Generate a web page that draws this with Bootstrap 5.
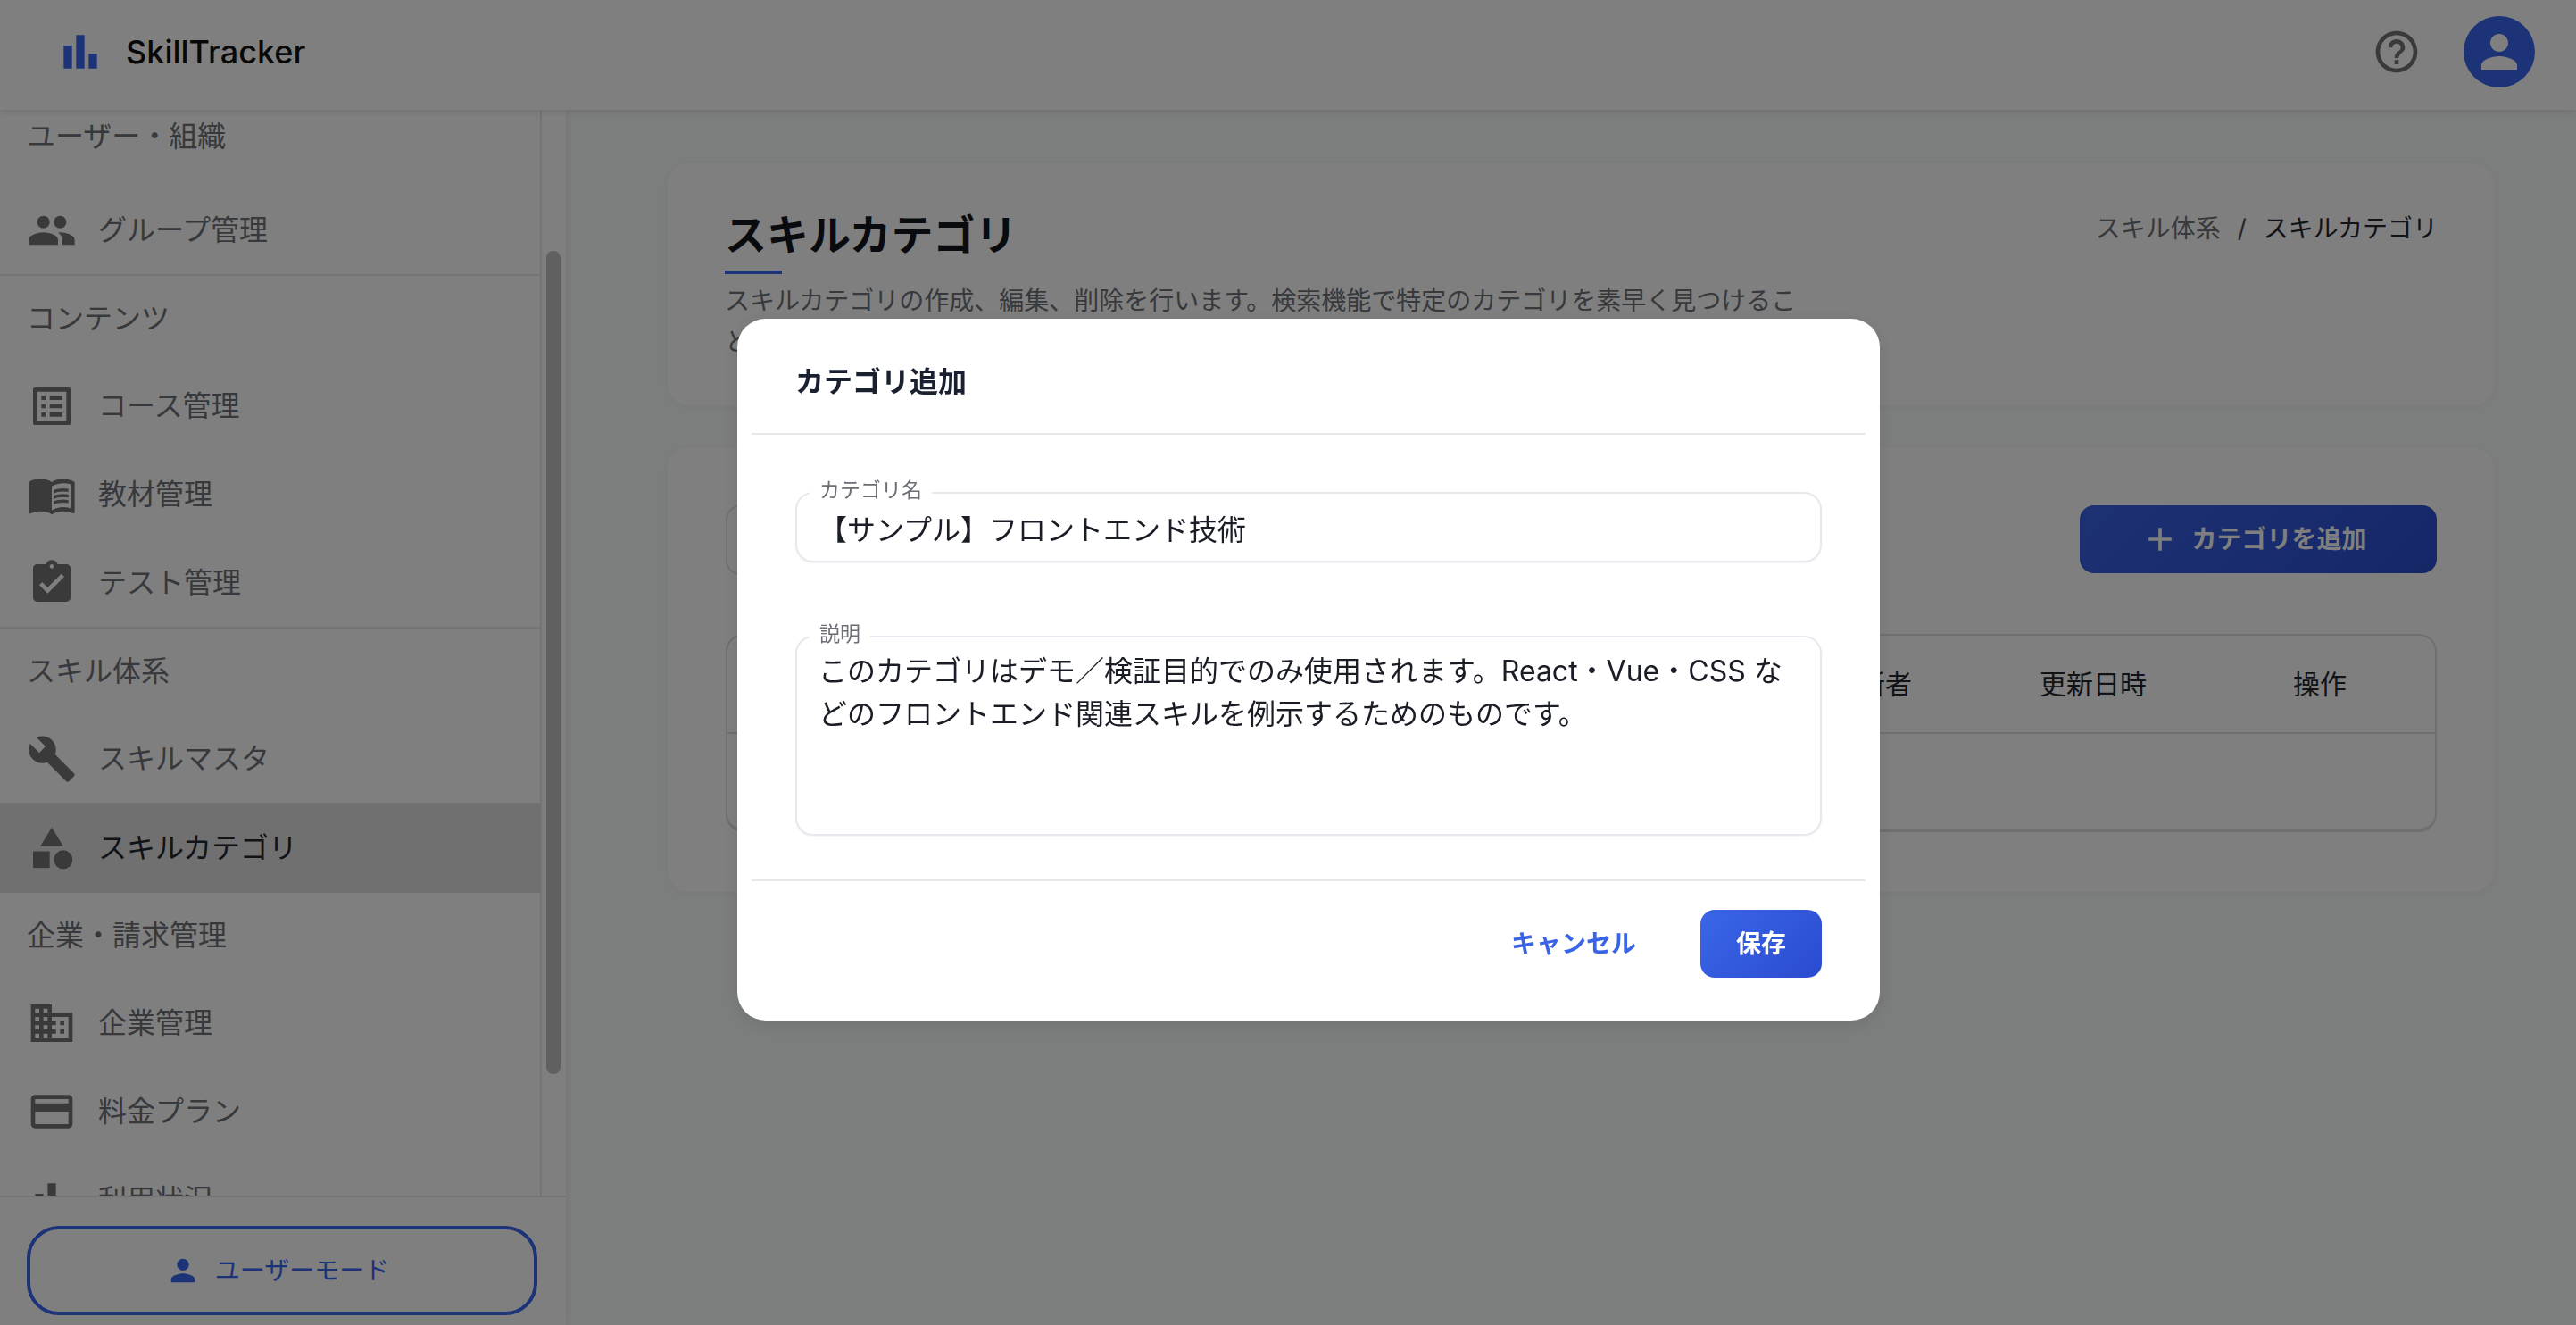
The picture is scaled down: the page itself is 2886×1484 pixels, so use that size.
<!DOCTYPE html>
<html lang="ja">
<head>
  <meta charset="UTF-8" />
  <meta name="viewport" content="width=device-width, initial-scale=1.0"/>
  <title>スキルカテゴリ - SkillTracker</title>
  <link href="https://cdn.jsdelivr.net/npm/bootstrap@5.3.0/dist/css/bootstrap.min.css" rel="stylesheet" />
  <style>
    :root { --st-blue: #3a67f0; --st-text: #6e7278; --st-icon: #757575; --st-line: #e8e8e8; }
    html, body { height: 100%; overflow: hidden; }
    body { font-family: Inter, "Noto Sans CJK JP", sans-serif; background: #f8fafa; color: #1a1d26; }

    .st-top { height: 123px; background: #fff; box-shadow: 0 2px 8px rgba(0,0,0,.12); padding: 0 46px 7px 62px; position: relative; z-index: 2; }
    .st-logo { width: 56px; height: 56px; fill: var(--st-blue); margin-right: 23px; }
    .st-brand { font-size: 36px; font-weight: 500; color: #111; }
    .st-help { width: 56px; height: 56px; fill: var(--st-icon); margin-right: 47px; }
    .st-avatar { width: 80px; height: 80px; background: var(--st-blue); fill: #fff; }
    .st-avatar svg { width: 60px; height: 60px; }

    .st-shell { height: calc(100% - 123px); }
    .st-side { width: 634px; flex: none; background: #fff; box-shadow: 2px 0 6px rgba(0,0,0,.05); }
    .st-scroll { height: 1216px; flex: none; overflow: hidden; }
    .st-nav { width: 607px; flex: none; border-right: 2px solid var(--st-line); }
    .st-track { width: 27px; padding-left: 5px; }
    .st-thumb { width: 16px; height: 922px; margin-top: 158px; border-radius: 8px; background: #c0c0c0; }

    .st-sec { height: 98px; border-top: 2px solid var(--st-line); padding-left: 30px; font-size: 32px; color: var(--st-text); }
    .st-sec-first { height: 85px; border-top: 0; padding-bottom: 25px; }
    .st-sec-plain { height: 96px; border-top: 0; }
    .st-item { height: 99px; padding: 0 0 0 30px; border: 0; font-size: 32px; color: var(--st-text); background: transparent; }
    .st-item svg { width: 56px; height: 56px; flex: none; fill: var(--st-icon); margin-right: 24px; }
    .st-item.st-on { height: 101px; background: #e0e0e2; color: #24272d; }

    .st-foot { flex: 1; border-top: 2px solid var(--st-line); padding: 32px 32px 0 30px; }
    .st-mode { height: 100px; padding: 0 11px 0 0; border: 4px solid var(--st-blue); border-radius: 36px; color: var(--st-blue); font-size: 28px; background: #fff; }
    .st-mode svg { width: 40px; height: 40px; fill: var(--st-blue); margin-right: 16px; }

    .st-main { flex: 1; padding: 60px 92px 0 114px; }
    .st-panel { background: #fff; border-radius: 24px; box-shadow: 0 2px 10px rgba(0,0,0,.03); }
    .st-head { height: 271px; padding: 52px 63px 0 64px; margin-bottom: 47px; }
    .st-title { font-size: 47px; line-height: 56px; font-weight: 700; color: #14161c; margin: 0; }
    .st-rule { width: 64px; height: 4px; background: var(--st-blue); margin: 12px 0 7px; }
    .st-desc { width: 1210px; font-size: 28px; line-height: 46px; color: var(--st-text); margin: 0; }
    .st-crumb { --bs-breadcrumb-item-padding-x: 19px; --bs-breadcrumb-margin-bottom: 0; --bs-breadcrumb-divider-color: #4c4f55; --bs-breadcrumb-item-active-color: #24272d; font-size: 28px; line-height: 46px; margin-top: -2px; color: var(--st-text); }
    .st-list { height: 498px; padding: 65px 64px 0 65px; }
    .st-search { width: 700px; height: 78px; border: 2px solid #e2e2e2; border-radius: 16px; }
    .st-add { width: 400px; height: 76px; padding: 0 10px 0 0; border: 0; border-radius: 16px; font-size: 28px; font-weight: 600; background: linear-gradient(135deg, #3a64e6, #2c4ed0); }
    .st-add svg { width: 44px; height: 44px; fill: #fff; margin-right: 13px; }
    .st-tablebox { margin-top: 66px; height: 222px; border: 2px solid #dedede; border-bottom-width: 4px; border-radius: 20px; overflow: hidden; }
    .st-tablebox .table { --bs-table-bg: transparent; --bs-table-border-color: #dedede; margin: 0; table-layout: fixed; }
    .st-tablebox th { height: 109px; font-size: 30px; font-weight: 400; vertical-align: middle; padding: 0 0 0 28px; border-bottom-width: 2px; color: #24272d; }
    .st-tablebox td { height: 109px; border: 0; }

    .st-dialog { max-width: none; width: 1280px; margin: 357px 0 0 826px; }
    .st-dialog .modal-content { height: 786px; border: 0; border-radius: 32px; box-shadow: 0 4px 20px rgba(0,0,0,.1); }
    .st-dialog .modal-header { height: 130px; margin: 0 16px; padding: 14px 49px 0; border-bottom: 2px solid #e7e7ec; }
    .st-dialog .modal-title { font-size: 32px; font-weight: 700; color: #1a2030; }
    .st-dialog .modal-body { flex: none; height: 498px; margin: 0 16px; padding: 64px 49px 0; }
    .st-dialog .modal-footer { margin: 0 16px; padding: 32px 49px 0; border-top: 2px solid #e7e7ec; }
    .st-dialog .modal-footer > * { margin: 0; }
    .st-field { position: relative; }
    .st-legend { position: absolute; left: 16px; top: -14px; padding: 0 11px; background: #fff; font-size: 23px; line-height: 24px; color: #6b6e76; }
    .st-input { height: 79px; padding: 0 24px; border: 2px solid #e8e8ee; border-radius: 20px; font-size: 32px; color: #1a1d26; box-shadow: 0 1px 2px rgba(0,0,0,.05); }
    .st-area { height: 224px; padding: 14px 24px 0; line-height: 48px; resize: none; }
    .st-gap { margin-top: 82px; }
    .st-cancel { font-size: 28px; font-weight: 600; color: #3a64e6; text-decoration: none; padding: 0; margin-right: 71px !important; }
    .st-save { width: 136px; height: 76px; border: 0; border-radius: 16px; font-size: 28px; font-weight: 600; background: linear-gradient(135deg, #3b66e8, #2a4bcf); }
  </style>
</head>
<body>

  <header class="st-top d-flex align-items-center">
    <svg class="st-logo" viewBox="0 0 24 24"><path d="M4 9h4v11H4zm12 4h4v7h-4zm-6-9h4v16h-4z"/></svg>
    <span class="st-brand">SkillTracker</span>
    <svg class="st-help ms-auto" viewBox="0 0 24 24"><path d="M11 18h2v-2h-2v2zm1-16C6.48 2 2 6.48 2 12s4.48 10 10 10 10-4.48 10-10S17.52 2 12 2zm0 18c-4.41 0-8-3.59-8-8s3.59-8 8-8 8 3.59 8 8-3.59 8-8 8zm0-14c-2.21 0-4 1.79-4 4h2c0-1.1.9-2 2-2s2 .9 2 2c0 2-3 1.75-3 5h2c0-2.25 3-2.5 3-5 0-2.21-1.79-4-4-4z"/></svg>
    <div class="st-avatar rounded-circle d-flex align-items-center justify-content-center">
      <svg viewBox="0 0 24 24"><path d="M12 12c2.21 0 4-1.79 4-4s-1.79-4-4-4-4 1.79-4 4 1.79 4 4 4zm0 2c-2.67 0-8 1.34-8 4v2h16v-2c0-2.66-5.33-4-8-4z"/></svg>
    </div>
  </header>

  <div class="st-shell d-flex">
    <aside class="st-side d-flex flex-column">
      <div class="st-scroll d-flex">
        <nav class="st-nav">
          <div class="st-sec st-sec-first d-flex align-items-center">ユーザー・組織</div>
          <div class="list-group list-group-flush">
            <a class="list-group-item st-item d-flex align-items-center"><svg viewBox="0 0 24 24"><path d="M16 11c1.66 0 2.99-1.34 2.99-3S17.66 5 16 5c-1.66 0-3 1.34-3 3s1.34 3 3 3zm-8 0c1.66 0 2.99-1.34 2.99-3S9.66 5 8 5C6.34 5 5 6.34 5 8s1.34 3 3 3zm0 2c-2.33 0-7 1.17-7 3.5V19h14v-2.5c0-2.33-4.67-3.5-7-3.5zm8 0c-.29 0-.62.02-.97.05 1.16.84 1.97 1.97 1.97 3.45V19h6v-2.5c0-2.33-4.67-3.5-7-3.5z"/></svg>グループ管理</a>
          </div>
          <div class="st-sec d-flex align-items-center">コンテンツ</div>
          <div class="list-group list-group-flush">
            <a class="list-group-item st-item d-flex align-items-center"><svg viewBox="0 0 24 24"><path d="M19 5v14H5V5h14m1.1-2H3.9c-.5 0-.9.4-.9.9v16.2c0 .4.4.9.9.9h16.2c.4 0 .9-.5.9-.9V3.9c0-.5-.5-.9-.9-.9zM11 7h6v2h-6V7zm0 4h6v2h-6v-2zm0 4h6v2h-6zM7 7h2v2H7zm0 4h2v2H7zm0 4h2v2H7z"/></svg>コース管理</a>
            <a class="list-group-item st-item d-flex align-items-center"><svg viewBox="0 0 24 24"><path d="M21 5c-1.11-.35-2.33-.5-3.5-.5-1.95 0-4.05.4-5.5 1.5-1.45-1.1-3.55-1.5-5.5-1.5S2.45 4.9 1 6v14.65c0 .25.25.5.5.5.1 0 .15-.05.25-.05C3.1 20.45 5.05 20 6.5 20c1.95 0 4.05.4 5.5 1.5 1.35-.85 3.8-1.5 5.5-1.5 1.65 0 3.35.3 4.75 1.05.1.05.15.05.25.05.25 0 .5-.25.5-.5V6c-.6-.45-1.25-.75-2-1zm0 13.5c-1.1-.35-2.3-.5-3.5-.5-1.7 0-4.15.65-5.5 1.5V8c1.35-.85 3.8-1.5 5.5-1.5 1.2 0 2.4.15 3.5.5v11.5z"/><path d="M17.5 10.5c.88 0 1.73.09 2.5.26V9.24c-.79-.15-1.64-.24-2.5-.24-1.7 0-3.24.29-4.5.83v1.66c1.13-.64 2.7-.99 4.5-.99zM13 12.49v1.66c1.13-.64 2.7-.99 4.5-.99.88 0 1.73.09 2.5.26V11.9c-.79-.15-1.64-.24-2.5-.24-1.7 0-3.24.3-4.5.83zM17.5 14.33c-1.7 0-3.24.29-4.5.83v1.66c1.13-.64 2.7-.99 4.5-.99.88 0 1.73.09 2.5.26v-1.52c-.79-.16-1.64-.24-2.5-.24z"/></svg>教材管理</a>
            <a class="list-group-item st-item d-flex align-items-center"><svg viewBox="0 0 24 24"><path d="M19 3h-4.18C14.4 1.84 13.3 1 12 1c-1.3 0-2.4.84-2.82 2H5c-1.1 0-2 .9-2 2v14c0 1.1.9 2 2 2h14c1.1 0 2-.9 2-2V5c0-1.1-.9-2-2-2zm-7 0c.55 0 1 .45 1 1s-.45 1-1 1-1-.45-1-1 .45-1 1-1zm-2 14l-4-4 1.41-1.41L10 14.17l6.59-6.59L18 9l-8 8z"/></svg>テスト管理</a>
          </div>
          <div class="st-sec d-flex align-items-center">スキル体系</div>
          <div class="list-group list-group-flush">
            <a class="list-group-item st-item d-flex align-items-center"><svg viewBox="0 0 24 24"><path d="M22.7 19l-9.1-9.1c.9-2.3.4-5-1.5-6.9-2-2-5-2.4-7.4-1.3L9 6 6 9 1.6 4.7C.4 7.1.9 10.1 2.9 12.1c1.9 1.9 4.6 2.4 6.9 1.5l9.1 9.1c.4.4 1 .4 1.4 0l2.3-2.3c.5-.4.5-1.1.1-1.4z"/></svg>スキルマスタ</a>
            <a class="list-group-item st-item st-on d-flex align-items-center"><svg viewBox="0 0 24 24"><path d="M12 2l-5.5 9h11z"/><circle cx="17.5" cy="17.5" r="4.5"/><path d="M3 13.5h8v8H3z"/></svg>スキルカテゴリ</a>
          </div>
          <div class="st-sec st-sec-plain d-flex align-items-center">企業・請求管理</div>
          <div class="list-group list-group-flush">
            <a class="list-group-item st-item d-flex align-items-center"><svg viewBox="0 0 24 24"><path d="M12 7V3H2v18h20V7H12zM6 19H4v-2h2v2zm0-4H4v-2h2v2zm0-4H4V9h2v2zm0-4H4V5h2v2zm4 12H8v-2h2v2zm0-4H8v-2h2v2zm0-4H8V9h2v2zm0-4H8V5h2v2zm10 12h-8v-2h2v-2h-2v-2h2v-2h-2V9h8v10zm-2-8h-2v2h2v-2zm0 4h-2v2h2v-2z"/></svg>企業管理</a>
            <a class="list-group-item st-item d-flex align-items-center"><svg viewBox="0 0 24 24"><path d="M20 4H4c-1.11 0-1.99.89-1.99 2L2 18c0 1.11.89 2 2 2h16c1.11 0 2-.89 2-2V6c0-1.11-.89-2-2-2zm0 14H4v-6h16v6zm0-10H4V6h16v2z"/></svg>料金プラン</a>
            <a class="list-group-item st-item d-flex align-items-center"><svg viewBox="0 0 24 24"><path d="M4 9h4v11H4zm12 4h4v7h-4zm-6-9h4v16h-4z"/></svg>利用状況</a>
          </div>
        </nav>
        <div class="st-track"><div class="st-thumb"></div></div>
      </div>
      <div class="st-foot">
        <button class="btn st-mode w-100 d-flex align-items-center justify-content-center" type="button">
          <svg viewBox="0 0 24 24"><path d="M12 12c2.21 0 4-1.79 4-4s-1.79-4-4-4-4 1.79-4 4 1.79 4 4 4zm0 2c-2.67 0-8 1.34-8 4v2h16v-2c0-2.66-5.33-4-8-4z"/></svg>ユーザーモード
        </button>
      </div>
    </aside>

    <main class="st-main">
      <section class="st-panel st-head d-flex justify-content-between align-items-start">
        <div>
          <h1 class="st-title">スキルカテゴリ</h1>
          <div class="st-rule"></div>
          <p class="st-desc">スキルカテゴリの作成、編集、削除を行います。検索機能で特定のカテゴリを素早く見つけることができます。</p>
        </div>
        <ol class="breadcrumb st-crumb">
          <li class="breadcrumb-item">スキル体系</li>
          <li class="breadcrumb-item active">スキルカテゴリ</li>
        </ol>
      </section>

      <section class="st-panel st-list">
        <div class="d-flex justify-content-between align-items-start">
          <div class="st-search"></div>
          <button class="btn text-white st-add d-flex align-items-center justify-content-center" type="button">
            <svg viewBox="0 0 24 24"><path d="M19 13h-6v6h-2v-6H5v-2h6V5h2v6h6v2z"/></svg>カテゴリを追加
          </button>
        </div>
        <div class="st-tablebox">
          <table class="table">
            <colgroup><col /><col width="233" /><col width="284" /><col width="187" /></colgroup>
            <thead><tr><th></th><th>更新者</th><th>更新日時</th><th>操作</th></tr></thead>
            <tbody><tr><td colspan="4"></td></tr></tbody>
          </table>
        </div>
      </section>
    </main>
  </div>

  <div class="modal-backdrop fade show"></div>
  <div class="modal d-block" tabindex="-1">
    <div class="modal-dialog st-dialog">
      <div class="modal-content">
        <div class="modal-header">
          <h5 class="modal-title">カテゴリ追加</h5>
        </div>
        <div class="modal-body">
          <div class="st-field">
            <label class="st-legend" for="catName">カテゴリ名</label>
            <input id="catName" class="form-control st-input" type="text" value="【サンプル】フロントエンド技術" />
          </div>
          <div class="st-field st-gap">
            <label class="st-legend" for="catDesc">説明</label>
            <textarea id="catDesc" class="form-control st-input st-area">このカテゴリはデモ／検証目的でのみ使用されます。React・Vue・CSS などのフロントエンド関連スキルを例示するためのものです。</textarea>
          </div>
        </div>
        <div class="modal-footer">
          <button class="btn btn-link st-cancel" type="button">キャンセル</button>
          <button class="btn btn-primary st-save" type="button">保存</button>
        </div>
      </div>
    </div>
  </div>

  <script src="https://cdn.jsdelivr.net/npm/bootstrap@5.3.0/dist/js/bootstrap.bundle.min.js"></script>
</body>
</html>
